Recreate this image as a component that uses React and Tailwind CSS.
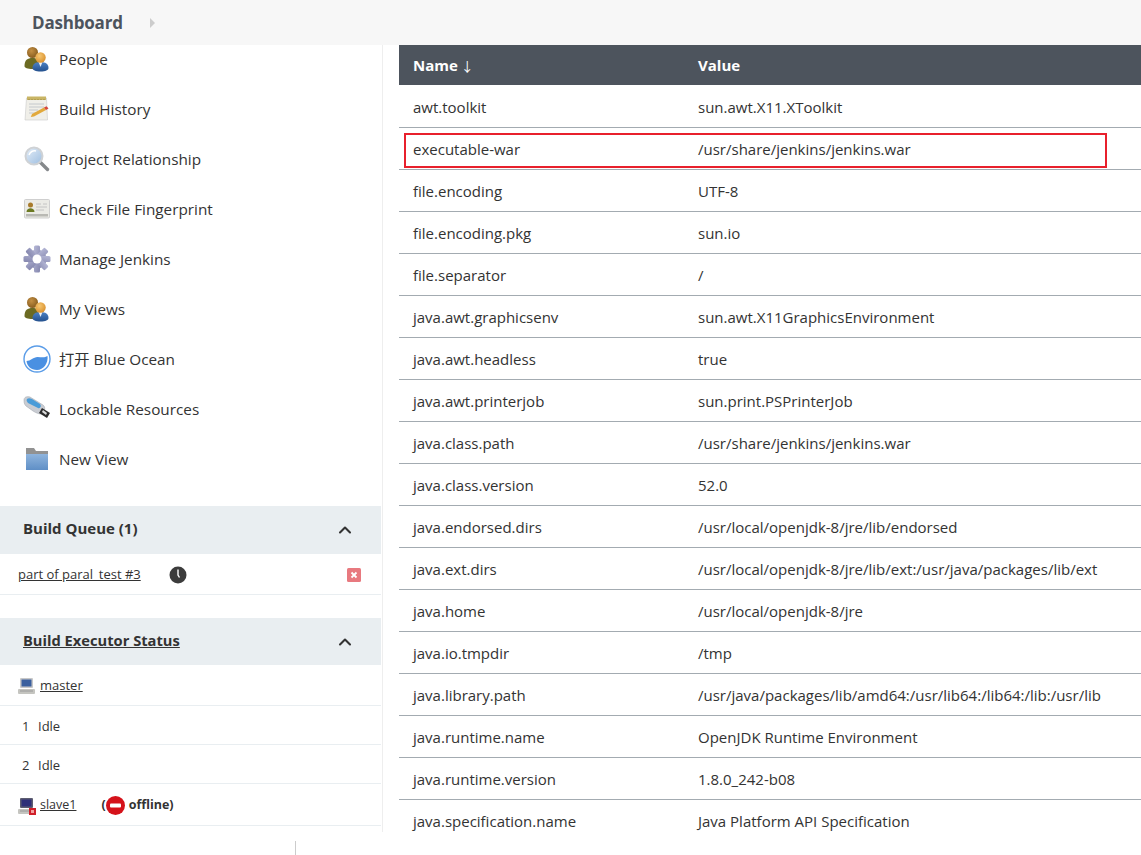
import React from 'react';
import { ChevronUp } from 'lucide-react';

function PeopleIcon() {
  return (
    <svg width="26" height="26" viewBox="0 0 26 26">
      <defs>
        <radialGradient id="headBack" cx="0.4" cy="0.35" r="0.7">
          <stop offset="0" stopColor="#c49044" />
          <stop offset="1" stopColor="#84591c" />
        </radialGradient>
        <radialGradient id="headFront" cx="0.4" cy="0.35" r="0.7">
          <stop offset="0" stopColor="#f6c873" />
          <stop offset="1" stopColor="#d98f2b" />
        </radialGradient>
        <linearGradient id="bodyFront" x1="0" y1="0" x2="0" y2="1">
          <stop offset="0" stopColor="#4d82c4" />
          <stop offset="1" stopColor="#23508e" />
        </linearGradient>
      </defs>
      <path d="M0.500 20c0-6 3-8 8-8s8 2 8 8c0 2-3 3-8 3s-8-1-8-3z" fill="#6b6a22" />
      <circle cx="8.500" cy="6.500" r="5.500" fill="url(#headBack)" />
      <path d="M8.500 22c0-4 3-6 8-6s8 2 8 6c0 2-3 3.500-8 3.500s-8-1.500-8-3.500z" fill="url(#bodyFront)" />
      <path d="M14.500 16l2 5 2-5z" fill="#f2f2f2" />
      <circle cx="16.500" cy="11.500" r="5.200" fill="url(#headFront)" />
    </svg>
  );
}

function HistoryIcon() {
  return (
    <svg width="26" height="26" viewBox="0 0 26 26">
      <path d="M2.500 2h20l1 22H1z" fill="#f0efe9" stroke="#c9c9c9" strokeWidth="0.600" />
      <rect x="3" y="0.500" width="19" height="3.500" fill="#c9b565" />
      <path d="M5 3v1M8 3v1M11 3v1M14 3v1M17 3v1M20 3v1" stroke="#8f7f3c" strokeWidth="0.800" />
      <path d="M5 8h15M5 11h15M5 14h9M5 17h7" stroke="#c4c8cc" strokeWidth="1" />
      <path d="M8 18l12-6.500 2 2.500-12 6.500-3.200 .500z" fill="#e2a93b" />
      <path d="M20 11.500l2.500-1.200 2 2.200-2.500 1.500z" fill="#d6473c" />
    </svg>
  );
}

function SearchIcon() {
  return (
    <svg width="26" height="26" viewBox="0 0 26 26">
      <defs>
        <linearGradient id="glass" x1="0" y1="0" x2="1" y2="1">
          <stop offset="0" stopColor="#e6eff8" />
          <stop offset="1" stopColor="#9cbde0" />
        </linearGradient>
      </defs>
      <path d="M16 16l7.500 7.500" stroke="#85888b" strokeWidth="3.400" strokeLinecap="round" />
      <circle cx="10" cy="10" r="8.500" fill="url(#glass)" stroke="#cfd2d5" strokeWidth="2" />
      <path d="M5 9c1-3 4-5 7-4" stroke="#fff" strokeWidth="1.500" fill="none" />
    </svg>
  );
}

function FingerprintIcon() {
  return (
    <svg width="26" height="20" viewBox="0 0 26 20">
      <rect x="0.500" y="0.500" width="25" height="18.500" rx="1" fill="#ebebe6" stroke="#cfcfcf" />
      <circle cx="6.500" cy="6" r="2.500" fill="#a87b2c" />
      <path d="M2.500 13c0-5 8-5 8 0z" fill="#6c7a23" />
      <path d="M12 5h5M19 5h4M12 8h11M12 11h8" stroke="#c4c4c4" strokeWidth="1" />
      <rect x="2" y="15" width="22" height="2.500" fill="#b9b9b4" />
    </svg>
  );
}

function GearIcon() {
  return (
    <svg width="28" height="28" viewBox="0 0 28 28">
      <defs>
        <linearGradient id="gear" x1="0" y1="0" x2="1" y2="1">
          <stop offset="0" stopColor="#b5b7d6" />
          <stop offset="1" stopColor="#8486ad" />
        </linearGradient>
      </defs>
      <g fill="url(#gear)">
        <circle cx="14" cy="14" r="9.500" />
        <rect x="11" y="0.500" width="6" height="27" rx="1.500" />
        <rect x="11" y="0.500" width="6" height="27" rx="1.500" transform="rotate(45 14 14)" />
        <rect x="11" y="0.500" width="6" height="27" rx="1.500" transform="rotate(90 14 14)" />
        <rect x="11" y="0.500" width="6" height="27" rx="1.500" transform="rotate(135 14 14)" />
      </g>
      <circle cx="14" cy="14" r="4.500" fill="#fff" />
    </svg>
  );
}

function OceanIcon() {
  return (
    <svg width="28" height="28" viewBox="0 0 28 28">
      <circle cx="14" cy="14" r="13" fill="#fff" stroke="#5b9de8" strokeWidth="1.400" />
      <path d="M3.500 16c4 0 7-4 11-4 4 0 7 1 10-1 1 7-4 14-10.500 14C8 25 4 21 3.500 16z" fill="#4a90e2" />
    </svg>
  );
}

function UsbIcon() {
  return (
    <svg width="28" height="26" viewBox="0 0 28 26">
      <path d="M1 4c0-3 3-4 6-3l13 8c3 2 2 8-2 9-2 0-5-1-8-3L3 10C1 8 1 6 1 4z" fill="#c9ccd2" stroke="#9ba0a8" strokeWidth="0.500" />
      <path d="M4 3c1-1 3-1 5 0l8 5c2 2 0 5-2 4L5 7C4 6 3 4 4 3z" fill="#4a9cd8" />
      <path d="M19 12l8 5-3 5-8-5z" fill="#2c2c2c" />
      <path d="M20 14l4 3-1 2-4-3z" fill="#dcdcdc" />
    </svg>
  );
}

function FolderIcon() {
  return (
    <svg width="26" height="24" viewBox="0 0 26 24">
      <defs>
        <linearGradient id="folder" x1="0" y1="0" x2="0" y2="1">
          <stop offset="0" stopColor="#8fb4dd" />
          <stop offset="1" stopColor="#5f8fc6" />
        </linearGradient>
      </defs>
      <path d="M2 1h8l2 3h12v4H2z" fill="#929292" />
      <rect x="2" y="7" width="22" height="16" fill="url(#folder)" />
    </svg>
  );
}

function ComputerIcon({ dark }) {
  return (
    <svg width="17" height="18" viewBox="0 0 17 18">
      <rect x="2" y="1" width="13" height="10" rx="1" fill={dark ? '#5d5d70' : '#c8c8c8'} />
      <rect x="3.500" y="2.500" width="10" height="7" fill={dark ? '#2f2f78' : '#3a5f9e'} />
      <rect x="0" y="12" width="17" height="5" rx="1" fill="#c5c5c0" />
      <path d="M2 14h13" stroke="#999" strokeWidth="1" />
    </svg>
  );
}

const NAV = [
  [<PeopleIcon />, 'People'],
  [<HistoryIcon />, 'Build History'],
  [<SearchIcon />, 'Project Relationship'],
  [<FingerprintIcon />, 'Check File Fingerprint'],
  [<GearIcon />, 'Manage Jenkins'],
  [<PeopleIcon />, 'My Views'],
  [<OceanIcon />, '打开 Blue Ocean'],
  [<UsbIcon />, 'Lockable Resources'],
  [<FolderIcon />, 'New View'],
];

const ROWS = [
  ['awt.toolkit', 'sun.awt.X11.XToolkit'],
  ['executable-war', '/usr/share/jenkins/jenkins.war'],
  ['file.encoding', 'UTF-8'],
  ['file.encoding.pkg', 'sun.io'],
  ['file.separator', '/'],
  ['java.awt.graphicsenv', 'sun.awt.X11GraphicsEnvironment'],
  ['java.awt.headless', 'true'],
  ['java.awt.printerjob', 'sun.print.PSPrinterJob'],
  ['java.class.path', '/usr/share/jenkins/jenkins.war'],
  ['java.class.version', '52.0'],
  ['java.endorsed.dirs', '/usr/local/openjdk-8/jre/lib/endorsed'],
  ['java.ext.dirs', '/usr/local/openjdk-8/jre/lib/ext:/usr/java/packages/lib/ext'],
  ['java.home', '/usr/local/openjdk-8/jre'],
  ['java.io.tmpdir', '/tmp'],
  ['java.library.path', '/usr/java/packages/lib/amd64:/usr/lib64:/lib64:/lib:/usr/lib'],
  ['java.runtime.name', 'OpenJDK Runtime Environment'],
  ['java.runtime.version', '1.8.0_242-b08'],
  ['java.specification.name', 'Java Platform API Specification'],
];

export default function App() {
  return (
    <div className="h-[855px] w-[1141px] overflow-hidden bg-white font-['Open_Sans','Noto_Sans_CJK_SC',sans-serif] text-[15px] text-[#333]">
      {/* top bar */}
      <div className="flex h-[45px] items-center bg-[#f7f7f7] pl-8">
        <span className="text-[17px] font-bold text-[#4d545d] tracking-[-0.2px]">Dashboard</span>
        <span className="ml-[27px] h-0 w-0 border-y-[5px] border-l-[5px] border-y-transparent border-l-[#ccc]" />
      </div>

      <div className="relative flex h-[810px]">
        {/* sidebar */}
        <div className="h-[787px] w-[383px] shrink-0 overflow-hidden border-r border-[#eee] pr-px">
          <div className="-mt-[11px] pb-[22px]">
            {NAV.map(([icon, label]) => (
              <div key={label} className="flex h-[50px] items-center">
                <div className="flex w-[59px] shrink-0 justify-center pl-[14px]">{icon}</div>
                <span className="text-[15.3px]">{label}</span>
              </div>
            ))}
          </div>

          <div className="flex h-[48px] items-center justify-between bg-[#e9eef1] pl-[23px] pr-[26px]">
            <span className="-mt-[3px] font-bold">Build Queue (1)</span>
            <ChevronUp size={20} strokeWidth={2.5} />
          </div>
          <div className="flex h-[41px] items-center border-b border-[#e9eef1] pl-[18px] pr-[20px] pt-[2px] text-[13px]">
            <span className="w-[150px] underline">part of paral_test #3</span>
            <svg width="18" height="18" viewBox="0 0 18 18" className="ml-[1px]">
              <circle cx="9" cy="9" r="8.500" fill="#3c3c3c" />
              <path d="M9 3.500V9l1.500 2.500" stroke="#fff" strokeWidth="1.400" fill="none" />
            </svg>
            <svg width="14" height="14" viewBox="0 0 14 14" className="ml-auto">
              <rect width="14" height="14" rx="1.500" fill="#e8797f" />
              <path d="M4.500 4.500l5 5M9.500 4.500l-5 5" stroke="#fff" strokeWidth="1.800" />
            </svg>
          </div>

          <div className="mt-[23px] flex h-[47px] items-center justify-between bg-[#e9eef1] pl-[23px] pr-[26px]">
            <span className="-mt-[2px] text-[14.7px] font-bold underline">Build Executor Status</span>
            <ChevronUp size={20} strokeWidth={2.5} />
          </div>
          <div className="flex h-[41px] items-center border-b border-[#e9eef1] pl-[18px] pt-[2px] text-[13px]">
            <ComputerIcon />
            <span className="ml-[5px] underline">master</span>
          </div>
          <div className="flex h-[39px] items-center border-b border-[#e9eef1] pl-[22px] pt-[4px] text-[13px]">
            <span className="w-[16px]">1</span>Idle
          </div>
          <div className="flex h-[39px] items-center border-b border-[#e9eef1] pl-[22px] pt-[4px] text-[13px]">
            <span className="w-[16px]">2</span>Idle
          </div>
          <div className="flex h-[42px] items-center border-b border-[#e9eef1] pl-[18px] pt-[2px] text-[13px]">
            <span className="relative">
              <ComputerIcon dark />
              <span className="absolute bottom-0 -right-[1px] h-[7px] w-[7px] border-2 border-[#d0202a] bg-[#f2a0a0]" />
            </span>
            <span className="ml-[5px] text-[12.5px] underline">slave1</span>
            <span className="ml-[25px] flex items-center text-[12.5px] font-bold">
              (
              <svg width="19" height="19" viewBox="0 0 19 19">
                <circle cx="9.500" cy="9.500" r="9.500" fill="#d5121a" />
                <rect x="4" y="7.500" width="11" height="4" rx="1" fill="#fff" />
              </svg>
              <span className="ml-[4px]">offline)</span>
            </span>
          </div>
        </div>

        {/* table */}
        <div className="ml-[16px] h-[810px] min-w-0 flex-1 overflow-hidden">
          <table className="w-[742px] table-fixed border-collapse">
            <thead>
              <tr className="h-[40px] bg-[#4d545d] text-left text-white">
                <th className="w-[299px] pl-[14px] font-bold">
                  Name<span className="ml-[3px] text-[13px] font-normal">↓</span>
                </th>
                <th className="font-bold">Value</th>
              </tr>
            </thead>
            <tbody>
              {ROWS.map(([name, value], i) => (
                <tr key={name} className={i === ROWS.length - 1 ? 'h-[42px]' : 'h-[42px] border-b border-[#a3abb1]'}>
                  <td className="pl-[14px] pt-[2px]">{name}</td>
                  <td className="pt-[2px]">{value}</td>
                </tr>
              ))}
            </tbody>
          </table>
        </div>

        {/* red highlight drawn over the screenshot */}
        <div className="absolute left-[404px] top-[88px] h-[35px] w-[703px] border-2 border-[#e8202c]" />
        <div className="absolute bottom-0 left-[295px] h-[14px] w-px bg-[#ccc]" />
      </div>
    </div>
  );
}
